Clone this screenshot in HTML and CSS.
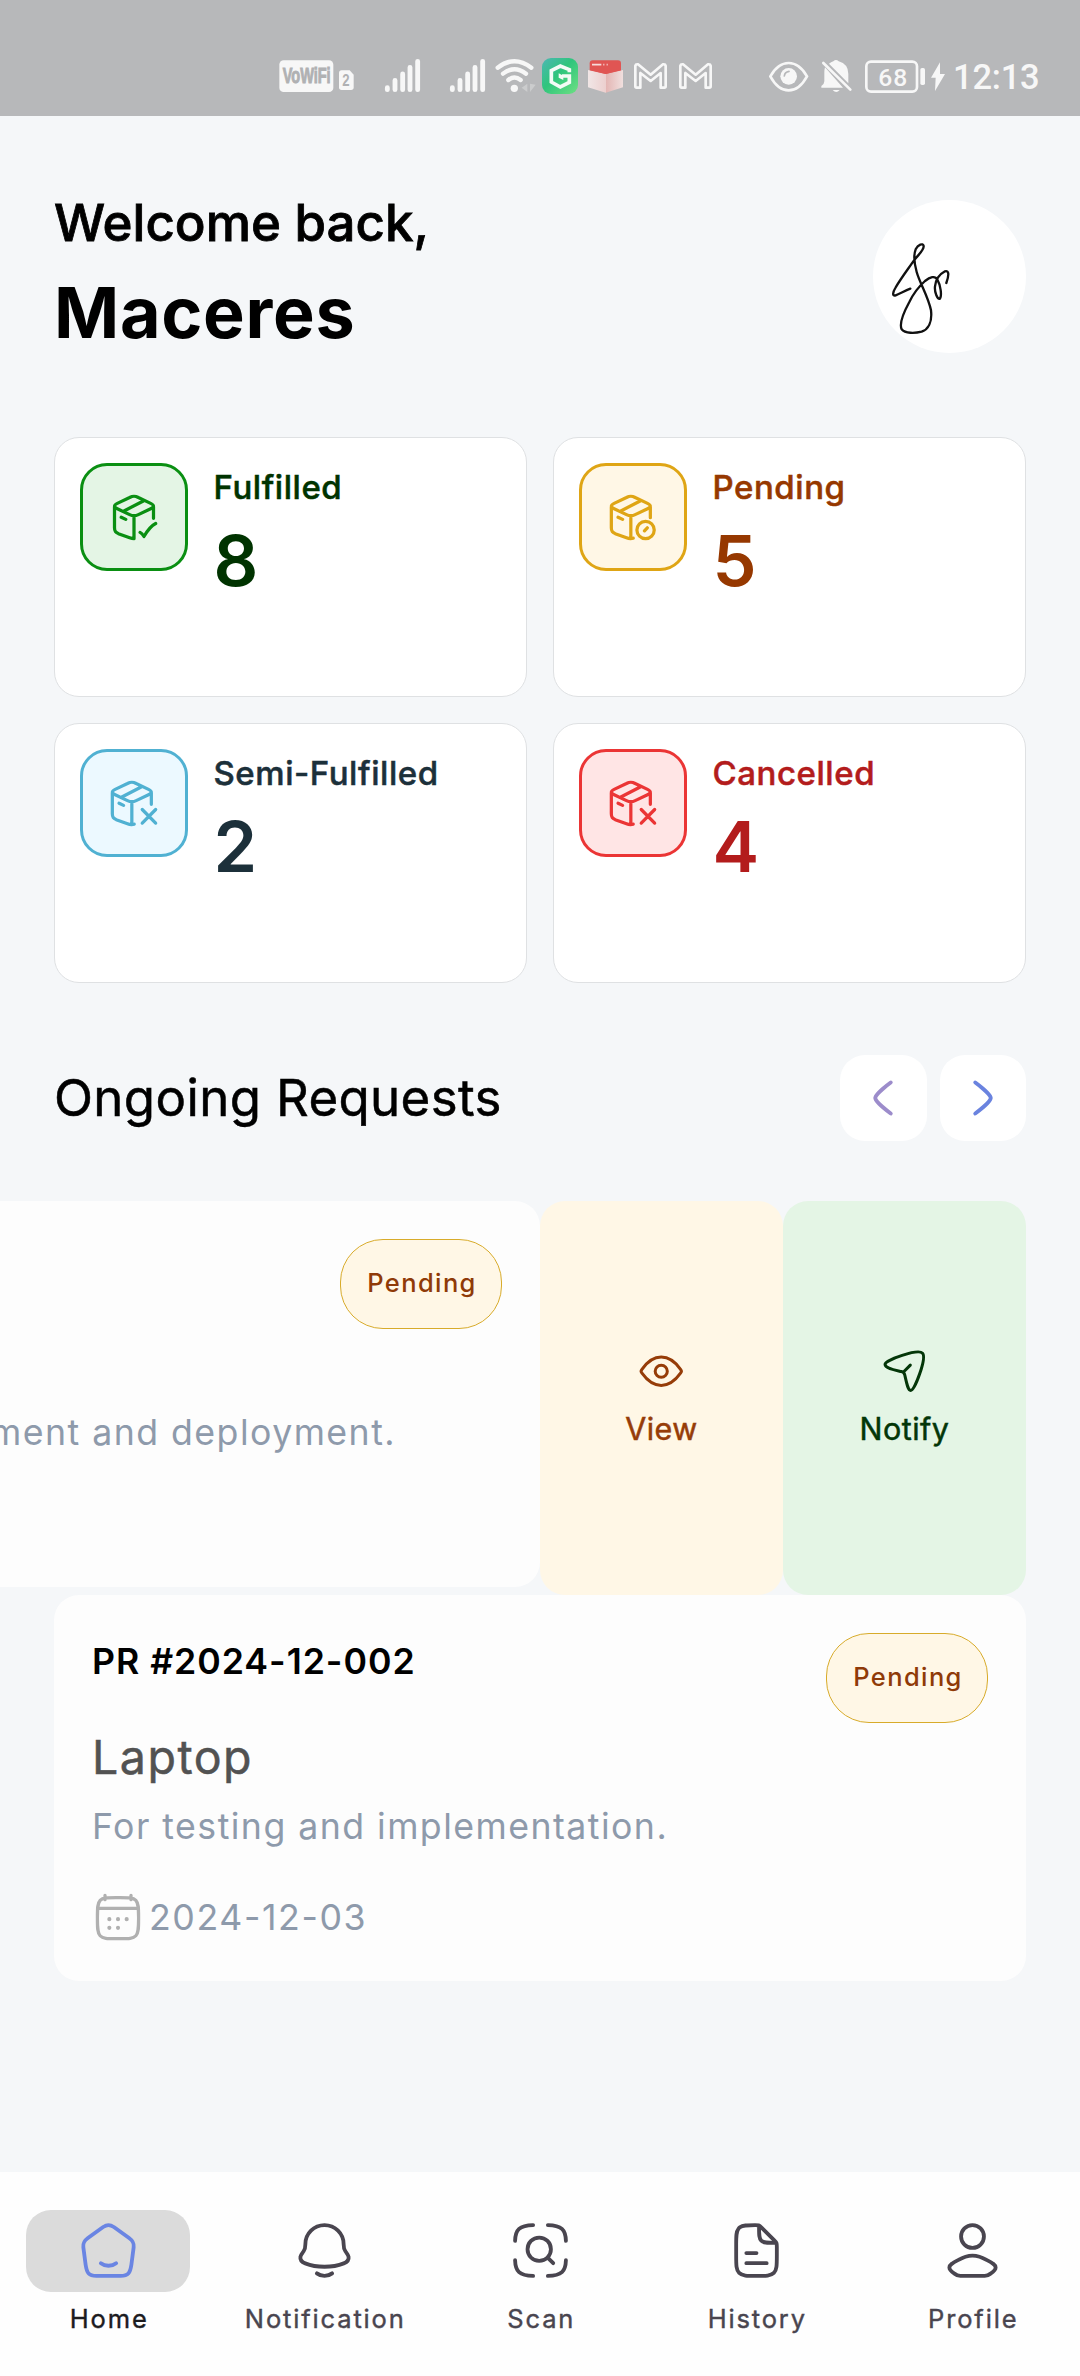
FILE: index.html
```html
<!DOCTYPE html>
<html lang="en">
<head>
<meta charset="utf-8">
<title>Purchase Requests</title>
<link rel="stylesheet" href="styles.css">
</head>
<body>
<div class="screen">

  <div class="statusbar">
    <svg class="sb-network" viewBox="57 45 771 120">
      <rect x="58" y="61" width="162" height="95" rx="13" fill="#f7f7f7"/>
      <text x="68" y="130" class="sb-vowifi" textLength="144" lengthAdjust="spacingAndGlyphs">VoWiFi</text>
      <path d="M245 91h24l12 13v38q0 8-8 8h-28q-8 0-8-8V99q0-8 8-8Z" fill="#f7f7f7"/>
      <text x="247" y="138" class="sb-sim" textLength="22" lengthAdjust="spacingAndGlyphs">2</text>
      <g stroke="#f7f7f7" stroke-width="14.5" stroke-linecap="round">
        <path d="M382 143v6M405 121v28M428 102v47M450 82v67M473 64v85"/>
        <path d="M577 143v6M600 121v28M623 102v47M645 82v67M668 64v85"/>
      </g>
      <g fill="none" stroke="#f7f7f7" stroke-width="13" stroke-linecap="round">
        <path d="M713 83Q763 44 814 83M729 101Q763 74 798 101M745 120Q763 105 782 120"/>
      </g>
      <circle cx="763" cy="145" r="11" fill="#f7f7f7"/>
      <path d="M802 131v25l-17-12.500ZM810 131v25l17-22Z" fill="#cbcccd"/>
    </svg>
    <svg class="sb-apps" viewBox="846 45 510 120">
      <defs>
        <linearGradient id="g1" x1="0" y1="0" x2="1" y2="1"><stop offset="0" stop-color="#4db7b4"/><stop offset=".45" stop-color="#2fc57c"/><stop offset="1" stop-color="#6fe083"/></linearGradient>
        <linearGradient id="g2" x1="0" y1="0" x2="1" y2="0"><stop offset="0" stop-color="#f1e6e6"/><stop offset=".5" stop-color="#ecd0cf"/><stop offset=".51" stop-color="#e3b5b3"/><stop offset="1" stop-color="#f0dfde"/></linearGradient>
      </defs>
      <rect x="846" y="54" width="108" height="108" rx="27" fill="url(#g1)"/>
      <path d="M928 97V89L901 78 874 92v34l27 15 27-14v-19h-22" fill="none" stroke="#f4fbf6" stroke-width="11"/>
      <path d="M896 100l14 7v13l-14-7Z" fill="#f4fbf6"/>
      <path d="M989 70q0-9 9-9h76q9 0 9 9v33h-94Z" fill="#e05553"/>
      <path d="M984 90l53 12 52-12v52l-52 16-53-16Z" fill="url(#g2)"/>
      <path d="M990 90l47 12 47-12" fill="#e05553"/>
      <path d="M996 74h28M1030 74h3M1040 74h3" stroke="#f6dada" stroke-width="5"/>
      <g fill="none" stroke="#f7f7f7" stroke-width="8" stroke-linejoin="round">
        <path d="M1126 139V77q1-5 8-4l38 31 37-31q7-1 8 4v62q0 4-4 4h-11v-44l-30 24-31-24v44h-11q-4 0-4-4Z"/>
        <path d="M1261 139V77q1-5 8-4l38 31 37-31q7-1 8 4v62q0 4-4 4h-11v-44l-30 24-31-24v44h-11q-4 0-4-4Z"/>
      </g>
    </svg>
    <svg class="sb-system" viewBox="327 45 528 120">
      <path d="M331 109C344 86 363 69 386 69s42 17 55 40c-13 24-32 42-55 42s-42-18-55-42Z" fill="none" stroke="#f7f7f7" stroke-width="8"/>
      <circle cx="386" cy="109" r="25" fill="#f7f7f7"/>
      <path d="M373 108q1-12 14-14" fill="none" stroke="#b7b8ba" stroke-width="5" stroke-linecap="round"/>
      <path d="M495 82L549 143H484v-5q9-6 9-14V98q0-9 2-16ZM507 71q6-5 13-7 8-8 16 0 29 8 29 38v28ZM518 150h21q-10 12-21 0Z" fill="#f7f7f7"/>
      <path d="M490 69l81 80" stroke="#f7f7f7" stroke-width="8" stroke-linecap="round"/>
      <rect x="619" y="65" width="152" height="90" rx="14" fill="none" stroke="#f7f7f7" stroke-width="8"/>
      <rect x="781" y="84" width="14" height="51" rx="5" fill="#f7f7f7"/>
      <text x="655" y="137" class="sb-battery" textLength="87">68</text>
      <path d="M840 67L813 113h14l-2 40 30-51h-15Z" fill="#f7f7f7"/>
    </svg>
    <span class="sb-time">12:13</span>
  </div>

  <main class="content">
    <header class="header">
      <div>
        <div class="welcome">Welcome back,</div>
        <div class="username">Maceres</div>
      </div>
      <div class="avatar">
        <svg viewBox="69 59 459 459"><path d="M181 325C165 331 148 341 137 345 126 348 128 336 136 323 150 298 175 265 192 240 205 223 222 210 221 197 219 187 204 193 197 207 190 225 193 250 200 275 210 310 235 350 243 390 247 425 235 447 215 454 195 459 165 460 155 447 147 430 160 398 178 365 190 340 205 320 225 302 240 290 255 285 262 298 272 315 276 345 270 355 262 358 253 335 255 318 257 300 268 282 285 273 298 270 297 285 289 308" fill="none" stroke="#111" stroke-width="7" stroke-linecap="round" stroke-linejoin="round"/></svg>
      </div>
    </header>

    <section class="stats">
      <div class="stat stat-green">
        <div class="tile">
          <svg class="pkg" viewBox="0 0 24 24"><path d="M4.300 5.700 10 3c1.600-.9 2.400-.9 4 0l5.700 2.700c1.700.8 1.700 1.700 0 2.500L14 10.900c-1.600.8-2.400.8-4 0L4.300 8.200c-1.700-.8-1.700-1.700 0-2.500ZM3 7.300V17c0 1.600.5 2 1.800 2.700L10 21.600c.8.3 1.400.4 2 .4V11.400M21 12.600V7.300M7.400 9.200l8.900-4.600M6.100 12.100l2.100 1M14.800 19.100c.8.4 1.200.9 1.800 1.900 1.500-2.600 3.200-4.900 5.400-6"/></svg>
        </div>
        <div class="stat-text"><div class="stat-label">Fulfilled</div><div class="stat-value">8</div></div>
      </div>
      <div class="stat stat-yellow">
        <div class="tile">
          <svg class="pkg" viewBox="0 0 24 24"><path d="M3.300 5.700 9 3c1.600-.9 2.400-.9 4 0l5.700 2.700c1.700.8 1.700 1.700 0 2.500L13 10.900c-1.600.8-2.400.8-4 0L3.300 8.200c-1.700-.8-1.700-1.700 0-2.500ZM2 7.300V17c0 1.600.5 2 1.800 2.700L9 21.600c1.200.5 2 .5 3.100.2M11 11.400V22M20 12.300v-5M6.400 9.200l8.900-4.600M5.100 12.100l2.100 1M17.300 18.400l1.300-1.400"/><circle cx="17.800" cy="18" r="4"/></svg>
        </div>
        <div class="stat-text"><div class="stat-label">Pending</div><div class="stat-value">5</div></div>
      </div>
      <div class="stat stat-cyan">
        <div class="tile">
          <svg class="pkg" viewBox="0 0 24 24"><path d="M3.300 5.700 9 3c1.600-.9 2.400-.9 4 0l5.700 2.700c1.700.8 1.700 1.700 0 2.500L13 10.900c-1.600.8-2.400.8-4 0L3.300 8.200c-1.700-.8-1.700-1.700 0-2.500ZM2 7.300V17c0 1.600.5 2 1.800 2.700L9 21.600c1.200.5 2 .5 3.100.2M11 11.400V22M20 12.600V7.300M6.400 9.200l8.900-4.600M5.100 12.100l2.100 1M15.800 15l6.200 6.300M22 15l-6.200 6.300"/></svg>
        </div>
        <div class="stat-text"><div class="stat-label">Semi-Fulfilled</div><div class="stat-value">2</div></div>
      </div>
      <div class="stat stat-red">
        <div class="tile">
          <svg class="pkg" viewBox="0 0 24 24"><path d="M3.300 5.700 9 3c1.600-.9 2.400-.9 4 0l5.700 2.700c1.700.8 1.700 1.700 0 2.500L13 10.900c-1.600.8-2.400.8-4 0L3.300 8.200c-1.700-.8-1.700-1.700 0-2.500ZM2 7.300V17c0 1.600.5 2 1.800 2.700L9 21.600c1.200.5 2 .5 3.100.2M11 11.400V22M20 12.600V7.300M6.400 9.200l8.900-4.600M5.100 12.100l2.100 1M15.800 15l6.200 6.300M22 15l-6.200 6.300"/></svg>
        </div>
        <div class="stat-text"><div class="stat-label">Cancelled</div><div class="stat-value">4</div></div>
      </div>
    </section>

    <div class="section-head">
      <h2 class="section-title">Ongoing Requests</h2>
      <div class="arrows">
        <button class="arrow arrow-prev"><svg viewBox="0 0 24 24"><path d="M15 6C15 6 9 10.419 9 12 9 13.581 15 18 15 18"/></svg></button>
        <button class="arrow arrow-next"><svg viewBox="0 0 24 24"><path d="M9 6C9 6 15 10.419 15 12 15 13.581 9 18 9 18"/></svg></button>
      </div>
    </div>
  </main>

  <section class="requests">
    <div class="swipe-row">
      <article class="card card-swiped">
        <div class="card-top"><span class="badge">Pending</span></div>
        <div class="card-title"></div>
        <div class="card-desc">ment and deployment.</div>
      </article>
      <div class="action action-view">
        <svg viewBox="0 0 24 24"><path d="M21.544 11.045C21.848 11.471 22 11.685 22 12c0 .316-.152.529-.456.955C20.178 14.871 16.689 19 12 19 7.311 19 3.822 14.871 2.456 12.955 2.152 12.529 2 12.316 2 12c0-.315.152-.529.456-.955C3.822 9.129 7.311 5 12 5c4.689 0 8.178 4.129 9.544 6.045Z"/><circle cx="12" cy="12" r="3"/></svg>
        <span>View</span>
      </div>
      <div class="action action-notify">
        <svg viewBox="0 0 24 24"><path d="M21.048 3.053C18.870.707 2.486 6.453 2.500 8.551c.015 2.379 6.398 3.111 8.167 3.607 1.064.298 1.349.604 1.594 1.720 1.111 5.052 1.669 7.565 2.940 7.622C17.228 21.589 23.173 5.342 21.048 3.053ZM11.500 12.500 15 9"/></svg>
        <span>Notify</span>
      </div>
    </div>

    <article class="card card-full">
      <div class="card-top"><span class="card-id">PR #2024-12-002</span><span class="badge">Pending</span></div>
      <div class="card-title">Laptop</div>
      <div class="card-desc">For testing and implementation.</div>
      <div class="card-date">
        <svg viewBox="0 0 24 24"><path d="M18 2v2M6 2v2M2.500 12.243c0-4.357 0-6.536 1.252-7.889C5.004 3 7.019 3 11.050 3h1.900c4.031 0 6.046 0 7.298 1.354C21.500 5.707 21.500 7.886 21.500 12.243v.514c0 4.357 0 6.536-1.252 7.889C18.996 22 16.981 22 12.950 22h-1.900c-4.031 0-6.046 0-7.298-1.354C2.500 19.293 2.500 17.114 2.500 12.757ZM3 8h18"/><path class="dots" d="M8 13h.01M12 13h.01M16 13h.01M8 17h.01M12 17h.01"/></svg>
        <span>2024-12-03</span>
      </div>
    </article>
  </section>

  <nav class="nav">
    <a class="nav-item active"><span class="nav-icon"><svg viewBox="0 0 24 24"><path d="M12 2c.8 0 1.400.3 2.100.75L20.100 7.100c1.500 1.100 2 1.900 1.800 3.600L21 17.600c-.5 3.400-1.300 4.400-4.200 4.400H7.200c-2.900 0-3.700-1-4.200-4.400L2.100 10.700C1.900 9 2.400 8.200 3.900 7.100L9.900 2.750C10.600 2.300 11.200 2 12 2ZM9 17c.8.65 1.900 1 3 1s2.200-.35 3-1"/></svg></span><span class="nav-label">Home</span></a>
    <a class="nav-item"><span class="nav-icon"><svg viewBox="0 0 24 24"><path d="M2.530 14.470c-.213 1.294.738 2.150 1.902 2.600 4.463 1.780 10.673 1.780 15.136 0 1.164-.45 2.115-1.306 1.902-2.600-.131-.857-.777-1.470-1.256-2.167C19.587 11.379 19.525 10.572 19.525 9.500 19.525 5.358 16.156 2 12 2 7.844 2 4.475 5.358 4.475 9.500c0 1.072-.062 1.879-.689 2.803-.479.697-1.125 1.310-1.256 2.167ZM9 21c.8.620 1.840 1 3 1s2.200-.38 3-1"/></svg></span><span class="nav-label">Notification</span></a>
    <a class="nav-item"><span class="nav-icon"><svg viewBox="0 0 24 24"><path d="M2 8.200C2.100 3.800 3.700 2.100 9.100 2M14.900 2c5.400.1 7 1.800 7.100 6.200M2 15.800c.1 4.400 1.700 6.100 7.100 6.200M14.900 22c5.400-.1 7-1.800 7.100-6.200M17 17l-2.200-2.200"/><circle cx="11.500" cy="11.500" r="4.600"/></svg></span><span class="nav-label">Scan</span></a>
    <a class="nav-item"><span class="nav-icon"><svg viewBox="0 0 24 24"><path d="M8 17h8M8 13h4M13 2.500V3c0 2.828 0 4.243.879 5.121C14.757 9 16.172 9 19 9h.5M20 10.657V14c0 3.771 0 5.657-1.172 6.828C17.657 22 15.771 22 12 22c-3.771 0-5.657 0-6.828-1.172C4 19.657 4 17.771 4 14V9.456c0-3.245 0-4.868.886-5.967.179-.222.381-.424.603-.603C6.588 2 8.211 2 11.456 2c.706 0 1.058 0 1.381.114.068.024.133.051.198.082.309.148.558.397 1.057.896l4.736 4.736c.579.579.868.868 1.020 1.235C20 9.431 20 9.839 20 10.657Z"/></svg></span><span class="nav-label">History</span></a>
    <a class="nav-item"><span class="nav-icon"><svg viewBox="0 0 24 24"><circle cx="12" cy="6.500" r="4.500"/><path d="M12 14c2 0 4 .8 5.700 1.800 2.100 1.100 3.400 1.800 3.400 2.900 0 .9-.8 1.600-2 2.400-.9.7-1.500.9-2.300.9H7.200c-.8 0-1.400-.2-2.300-.9-1.200-.8-2-1.500-2-2.400 0-1.100 1.300-1.800 3.400-2.900C8 14.800 10 14 12 14Z"/></svg></span><span class="nav-label">Profile</span></a>
  </nav>
</div>
</body>
</html>
```
FILE: styles.css
```css
* { box-sizing: border-box; margin: 0; padding: 0; }

body { background: #f5f7f9; font-family: Inter, "Liberation Sans", sans-serif; color: #000; }

.screen { width: 1080px; height: 2376px; display: flex; flex-direction: column; overflow: hidden; }

svg { display: block; flex: none; }

/* Status bar */
.statusbar { height: 116px; background: #b7b8ba; display: flex; align-items: flex-start; padding: 55px 0 0 279px; flex: none; }
.sb-network { width: 257px; height: 40px; margin-right: 6px; }
.sb-apps { width: 170px; height: 40px; margin-right: 57px; }
.sb-system { width: 176px; height: 40px; margin-right: 8px; }
.sb-time { font: 500 34.5px/44px Roboto, sans-serif; color: #f7f7f7; letter-spacing: -0.2px; }
.sb-vowifi { font: 700 64px "Liberation Sans", sans-serif; fill: #b0b1b3; stroke: #b0b1b3; stroke-width: 3; }
.sb-sim { font: 700 48px "Liberation Sans", sans-serif; fill: #b0b1b3; }
.sb-battery { font: 500 74px Roboto, sans-serif; fill: #f7f7f7; }

/* Header */
.content { padding: 62px 54px 0; flex: none; }
.header { display: flex; justify-content: space-between; height: 259px; }
.welcome { font-size: 51px; line-height: 90px; font-weight: 500; letter-spacing: 0; -webkit-text-stroke: 0.8px currentColor; }
.username { font-size: 70px; line-height: 90px; font-weight: 700; letter-spacing: 0.69px; }
.avatar { width: 153px; height: 153px; margin-top: 22px; border-radius: 50%; background: #fff; overflow: hidden; }

/* Stat cards */
.stats { display: grid; grid-template-columns: 473px 473px; gap: 26px; grid-auto-rows: 260px; }
.stat { background: #fff; border: 1px solid #dfe1e3; border-radius: 25px; padding: 25px; display: flex; gap: 25.500px; }
.tile { width: 108px; height: 108px; border: 3px solid currentColor; border-radius: 27px; display: flex; align-items: center; justify-content: center; flex: none; }
.pkg { width: 52px; height: 52px; fill: none; stroke: currentColor; stroke-width: 1.500; stroke-linecap: round; stroke-linejoin: round; }
.stat-label { font-size: 33px; line-height: 48px; font-weight: 500; letter-spacing: 0.550px; -webkit-text-stroke: 0.5px currentColor; }
.stat-value { font-size: 70px; line-height: 99px; font-weight: 600; }
.stat-green .tile { color: #0a8f12; background: #e4f5e5; }
.stat-green .stat-text { color: #003300; }
.stat-yellow .tile { color: #dfa515; background: #fff7e6; }
.stat-yellow .stat-text { color: #963800; }
.stat-cyan .tile { color: #50b1d2; background: #ecf9ff; }
.stat-cyan .stat-text { color: #1c303a; }
.stat-red .tile { color: #eb3535; background: #ffe5e5; }
.stat-red .stat-text { color: #b31c1c; }

/* Section heading */
.section-head { display: flex; justify-content: space-between; align-items: center; height: 86px; margin-top: 72px; }
.section-title { font-size: 51px; line-height: 85px; height: 86px; font-weight: 400; letter-spacing: 0.360px; -webkit-text-stroke: 0.5px currentColor; }
.arrows { display: flex; gap: 13px; }
.arrow { width: 86.500px; height: 86px; border: 0; border-radius: 25px; background: #fff; display: flex; align-items: center; justify-content: center; }
.arrow svg { width: 62px; height: 62px; fill: none; stroke: currentColor; stroke-width: 1.500; stroke-linecap: round; stroke-linejoin: round; }
.arrow-prev { color: #9c8ccb; }
.arrow-next { color: #6a83df; }

/* Requests */
.requests { margin-top: 60px; display: flex; flex-direction: column; flex: 1; }
.swipe-row { display: flex; height: 394px; align-items: stretch; }
.card { background: #fdfdfd; height: 386px; padding: 38px; }
.card-swiped { width: 540px; border-radius: 0 25px 25px 0; overflow: hidden; }
.card-full { width: 972px; margin-left: 54px; border-radius: 25px; }
.card-top { display: flex; justify-content: space-between; height: 90px; }
.card-swiped .card-top { justify-content: flex-end; }
.card-id { font-size: 35.700px; line-height: 56px; font-weight: 600; letter-spacing: 0.950px; }
.badge { width: 162px; height: 90px; border: 1px solid #d8ab2a; border-radius: 43px; background: #fff7e6; color: #8f3a08; font-size: 25.500px; line-height: 86px; font-weight: 500; letter-spacing: 1.400px; text-indent: 2px; text-align: center; }
.card-title { font-size: 46.500px; line-height: 68px; height: 68px; font-weight: 400; letter-spacing: 1.500px; color: #525252; -webkit-text-stroke: 0.5px currentColor; }
.card-desc { font-size: 35.700px; line-height: 70px; letter-spacing: 1.450px; color: #8e9aab; white-space: nowrap; }
.card-swiped .card-desc { display: flex; justify-content: flex-end; margin-right: 106px; }
.card-date { display: flex; align-items: center; height: 52px; margin-top: 30px; gap: 5px; font-size: 35.700px; letter-spacing: 1.600px; color: #8e9aab; }
.card-date svg { width: 52px; height: 52px; fill: none; stroke: #b0b0b0; stroke-width: 1.500; stroke-linecap: round; stroke-linejoin: round; }
.card-date .dots { stroke-width: 1.900; }

.action { width: 243px; border-radius: 25px; display: flex; flex-direction: column; align-items: center; padding-top: 146px; font-size: 30.500px; line-height: 40px; font-weight: 400; letter-spacing: 0.450px; -webkit-text-stroke: 0.5px currentColor; }
.action svg { width: 48.500px; height: 48.500px; margin-bottom: 13.500px; fill: none; stroke: currentColor; stroke-width: 1.500; stroke-linecap: round; stroke-linejoin: round; }
.action-view { background: #fff7e6; color: #963c08; }
.action-notify { background: #e4f5e5; color: #033608; }

/* Bottom navigation */
.nav { height: 204px; background: #fefefe; display: flex; flex: none; padding-top: 38px; }
.nav-item { width: 216px; display: flex; flex-direction: column; align-items: center; color: #49454f; }
.nav-icon { width: 164px; height: 82px; padding-bottom: 1px; border-radius: 25px; display: flex; align-items: center; justify-content: center; }
.nav-icon svg { width: 61px; height: 61px; fill: none; stroke: currentColor; stroke-width: 1.500; stroke-linecap: round; stroke-linejoin: round; }
.nav-label { font-size: 25.500px; line-height: 40px; margin-top: 7px; font-weight: 400; letter-spacing: 1.850px; text-indent: 2.500px; -webkit-text-stroke: 0.4px currentColor; }
.active .nav-icon { background: #dbdbdb; color: #6a85e3; }
.active .nav-label { color: #1c1b1f; }
```
